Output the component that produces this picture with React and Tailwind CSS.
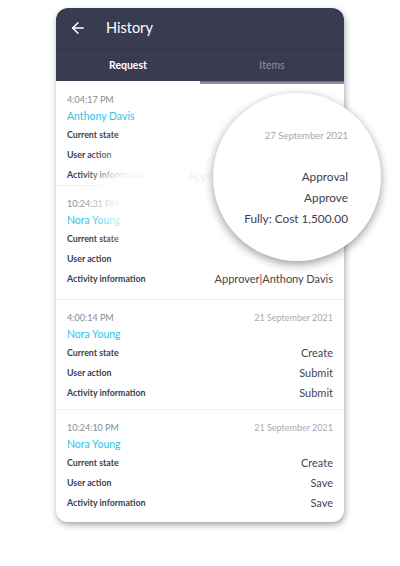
import React from 'react';
import { ArrowLeft } from 'lucide-react';

const entries = [
  {
    time: '4:04:17 PM',
    name: 'Anthony Davis',
    date: '',
    rows: [
      ['Current state', ''],
      ['User action', ''],
      ['Activity information', ''],
    ],
    pad: 'pt-[9px] pb-0',
    first: true,
  },
  {
    time: '10:24:31 PM',
    name: 'Nora Young',
    date: '',
    rows: [
      ['Current state', ''],
      ['User action', ''],
      ['Activity information', 'Approver|Anthony Davis'],
    ],
    pad: 'pt-[11px] pb-[10px] border-b border-[#f0f0f2]',
  },
  {
    time: '4:00:14 PM',
    name: 'Nora Young',
    date: '21 September 2021',
    rows: [
      ['Current state', 'Create'],
      ['User action', 'Submit'],
      ['Activity information', 'Submit'],
    ],
    pad: 'pt-[11px] pb-[6px] border-b border-[#f0f0f2]',
  },
  {
    time: '10:24:10 PM',
    name: 'Nora Young',
    date: '21 September 2021',
    rows: [
      ['Current state', 'Create'],
      ['User action', 'Save'],
      ['Activity information', 'Save'],
    ],
    pad: 'pt-[11px] pb-[9px]',
  },
];

function Entry({ item }) {
  return (
    <div className={'px-[11px] ' + item.pad}>
      <div className="flex justify-between items-center h-[14px]">
        <span className="text-[9px] text-[#8a8b92]">{item.time}</span>
        <span className="text-[9px] text-[#a9aab0]">{item.date}</span>
      </div>
      <div className="h-[18px] pt-[2px] flex items-center text-[10.5px] text-[#2ec4e6]">{item.name}</div>
      {item.rows.map(([label, value]) => (
        <div key={label} className="h-[20px] flex justify-between items-center">
          <span className="text-[8.8px] font-bold text-[#3c3e4b]">{label}</span>
          <span className="text-[11px] text-[#45464f]">{value}</span>
        </div>
      ))}
    </div>
  );
}

export default function App() {
  return (
    <div
      className="w-[400px] h-[566px] bg-white relative overflow-hidden"
      style={{ fontFamily: 'Lato, "Open Sans", sans-serif' }}
    >
      <div className="ml-[56px] mt-[8px] w-[288px] rounded-[12px] bg-white shadow-[1px_3px_6px_rgba(0,0,0,0.35)] overflow-hidden relative">
        {/* Header */}
        <div className="bg-[#393c51]">
          <div className="h-[41px] flex items-center border-b border-[#33364a]">
            <ArrowLeft className="ml-[13px] text-white" size={18} strokeWidth={2} />
            <span className="ml-[19px] text-[14.5px] text-white">History</span>
          </div>
          <div className="flex h-[35px]">
            <div className="flex-1 flex flex-col">
              <div className="flex-1 flex items-center justify-center pt-[1px] text-[10.5px] font-bold text-white">Request</div>
              <div className="h-[3px] bg-white" />
            </div>
            <div className="flex-1 flex flex-col">
              <div className="flex-1 flex items-center justify-center pt-[1px] text-[10.5px] text-[#8d8fa0]">Items</div>
              <div className="h-[3px] bg-[#8f91a4] border-t border-[#6c6e82]" />
            </div>
          </div>
        </div>

        {/* List */}
        <div className="relative">
          {entries.map((item, i) => (
            <React.Fragment key={i}>
              <Entry item={item} />
              {item.first && (
                <div className="h-px bg-gradient-to-r from-[#ececef] via-[#f4f4f6] to-transparent" />
              )}
            </React.Fragment>
          ))}
          {/* fade around magnifier */}
          <div className="absolute left-[40px] top-[61px] w-[300px] h-[95px] rounded-full bg-white/95 blur-[12px]" />
          <div className="absolute left-[120px] top-[39px] w-[200px] h-[60px] rounded-full bg-white blur-[8px]" />
          <span className="absolute left-[132px] top-[84px] text-[11px] text-[#45464f]/10">Approval</span>
        </div>
      </div>

      {/* Magnifier */}
      <div className="absolute left-[213px] top-[93px] w-[168px] h-[168px] rounded-full bg-white shadow-[0_3px_10px_rgba(0,0,0,0.4)] flex flex-col items-end pr-[33px] pt-[35px]">
        <span className="text-[9.5px] text-[#a5a6ad] leading-[16px]">27 September 2021</span>
        <span className="mt-[22px] text-[11.8px] text-[#3f4049] leading-[21px]">Approval</span>
        <span className="text-[11.8px] text-[#3f4049] leading-[21px]">Approve</span>
        <span className="text-[11.8px] text-[#3f4049] leading-[21px]">Fully: Cost 1,500.00</span>
      </div>
    </div>
  );
}
